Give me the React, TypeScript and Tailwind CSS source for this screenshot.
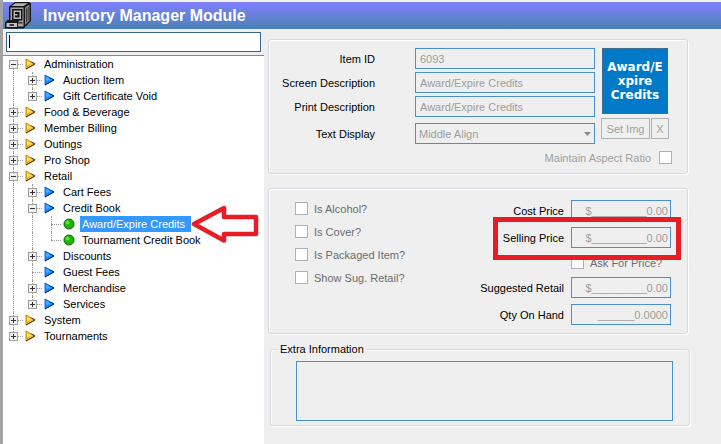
import { useState } from 'react'
import clsx from 'clsx'

type Node = { label: string; icon: 'gold' | 'blue' | 'dot'; open?: boolean; leaf?: boolean; children?: Node[] }

const tree: Node[] = [
  { label: 'Administration', icon: 'gold', open: true, children: [
    { label: 'Auction Item', icon: 'blue' },
    { label: 'Gift Certificate Void', icon: 'blue' },
  ] },
  { label: 'Food & Beverage', icon: 'gold' },
  { label: 'Member Billing', icon: 'gold' },
  { label: 'Outings', icon: 'gold' },
  { label: 'Pro Shop', icon: 'gold' },
  { label: 'Retail', icon: 'gold', open: true, children: [
    { label: 'Cart Fees', icon: 'blue' },
    { label: 'Credit Book', icon: 'blue', open: true, children: [
      { label: 'Award/Expire Credits', icon: 'dot', leaf: true },
      { label: 'Tournament Credit Book', icon: 'dot', leaf: true },
    ] },
    { label: 'Discounts', icon: 'blue' },
    { label: 'Guest Fees', icon: 'blue', leaf: true },
    { label: 'Merchandise', icon: 'blue' },
    { label: 'Services', icon: 'blue' },
  ] },
  { label: 'System', icon: 'gold' },
  { label: 'Tournaments', icon: 'gold' },
]

const field = 'block h-[21px] border border-[#4a90d0] bg-transparent text-[#9d9d9d]'
const group = 'rounded-[3px] border border-[#d5dbe1] shadow-[inset_1px_1px_0_#fff,1px_1px_0_#fff]'

function Cabinet() {
  return (
    <svg width="26" height="27" viewBox="0 0 26 27" aria-hidden="true">
      <path d="M4 4.500 10 0H24L26 1.500V19L18.500 26.500H4Z" fill="#151515" />
      <path d="M6.500 4 10.500 1.200H23L18.500 4Z" fill="#b4b4b4" />
      <path d="M20 5.500 24.500 2.500V18.500L20 23Z" fill="#8a8a8a" />
      <path d="M21.500 6.500V20M23.200 5V18.500" stroke="#333" />
      <path d="M5.500 5.500H18.500V24.500H5.500Z" fill="#a4a4a4" />
      <path d="M7 7H17.500V18.500H7Z" fill="#151515" />
      <path d="M8.500 8.500H16V17H8.500Z" fill="#b4b4b4" />
      <path d="M10 10H14.500V15.500H10V13.500H12.500V12H10Z" fill="#151515" />
      <path d="M13 20H17.500V21.500H13Z" fill="#333" />
      <path d="M0 20.500 2.500 18H14.500L13 20.500V26.500H0Z" fill="#151515" />
      <path d="M1.500 21H12V25H1.500Z" fill="#c4c4c4" />
      <path d="M4.500 22.200H9V23.800H4.500Z" fill="#151515" />
    </svg>
  )
}

function NodeIcon({ kind }: { kind: Node['icon'] }) {
  if (kind === 'dot') return (
    <svg width="12" height="12" viewBox="0 0 12 12" className="ml-[2px]" aria-hidden="true">
      <circle cx="6" cy="6" r="5" fill="#19b800" stroke="#14610b" />
      <circle cx="4.500" cy="4.500" r="2" fill="#5be63c" />
    </svg>
  )
  const gold = kind === 'gold'
  return (
    <svg width="11" height="12" viewBox="0 0 11 12" className="ml-[2px]" aria-hidden="true">
      <path d="M1 1 10 6 1 11Z" fill={gold ? '#f2b81c' : '#1687f5'} stroke={gold ? '#c98a10' : '#1268d8'} />
      <path d="M2 2.500V7L7 6Z" fill={gold ? '#ffe07a' : '#45b4ff'} />
      <path d="M1 11 10 6 6.500 4" fill="none" stroke={gold ? '#4e2d20' : '#122a80'} />
    </svg>
  )
}

function Pointer() {
  return (
    <svg width="68" height="40" viewBox="0 0 68 40" className="absolute left-full -top-[12px] z-10" aria-hidden="true">
      <path d="M3 20 33 4V13H65V30H33V36.500Z" fill="#fff" stroke="#e81c24" strokeWidth="4.500" strokeLinejoin="round" />
    </svg>
  )
}

function Rows({ nodes, guides, selected, onSelect }: { nodes: Node[]; guides: boolean[]; selected: string; onSelect: (s: string) => void }) {
  return (
    <ul>
      {nodes.map((n, i) => {
        const last = i === nodes.length - 1
        const first = i === 0 && guides.length === 0
        return (
          <li key={n.label}>
            <div className="flex h-4 items-center">
              {guides.map((g, k) => <span key={k} className="flex h-4 w-[19px] justify-center">{g && <span className="border-l border-dotted border-[#999]" />}</span>)}
              <span className="relative flex h-4 w-[19px] items-center justify-center">
                <span className={clsx('absolute left-[9px] border-l border-dotted border-[#999]', first ? 'top-2 bottom-0' : last ? 'top-0 h-2' : 'inset-y-0')} />
                <span className="absolute left-[9px] right-0 top-2 border-t border-dotted border-[#999]" />
                {!n.leaf && (
                  <button aria-label={n.label} className="relative grid size-[9px] place-items-center border border-[#a0a0a0] bg-[#f0f0f0]">
                    <span className="h-px w-[5px] bg-[#333]" />
                    {!n.open && <span className="absolute h-[5px] w-px bg-[#333]" />}
                  </button>
                )}
              </span>
              <span className="w-[19px]"><NodeIcon kind={n.icon} /></span>
              <span className="relative">
                <button onClick={() => onSelect(n.label)} className={clsx('block h-4 px-[2px] leading-4', selected === n.label && 'bg-[#3399ff] pr-[6px] text-white')}>{n.label}</button>
                {n.label === 'Award/Expire Credits' && <Pointer />}
              </span>
            </div>
            {n.open && n.children && <Rows nodes={n.children} guides={[...guides, !last]} selected={selected} onSelect={onSelect} />}
          </li>
        )
      })}
    </ul>
  )
}

function Check({ label }: { label: string }) {
  return (
    <label className="flex h-[13px] items-center gap-[6px] text-[#6d6d6d]">
      <input type="checkbox" disabled className="size-[13px] appearance-none border border-[#adb2b5] bg-white" />
      {label}
    </label>
  )
}

function Money({ id, label, value }: { id: string; label: string; value: string }) {
  return (
    <div className="flex items-center justify-end gap-[7px]">
      <label htmlFor={id}>{label}</label>
      <input id={id} disabled defaultValue={value} className={clsx(field, 'w-[100px] px-[2px] text-right')} />
    </div>
  )
}

function TextRow({ id, label, value }: { id: string; label: string; value: string }) {
  return (
    <div className="flex items-center gap-10">
      <label htmlFor={id} className="w-[106px] text-right">{label}</label>
      <input id={id} disabled defaultValue={value} className={clsx(field, 'min-w-0 flex-1 px-1')} />
    </div>
  )
}

export default function App() {
  const [selected, setSelected] = useState('Award/Expire Credits')
  const [query, setQuery] = useState('')
  return (
    <div className="flex min-h-screen flex-col border-l-[3px] border-[#a3a3a3] bg-[#efefef] font-['Liberation_Sans',Arial,sans-serif] text-[11px] leading-4 text-black">
      <header className="flex h-[29px] items-end gap-3 border-t-2 border-t-[#f5f5f5] bg-linear-to-b from-[#8080ff] to-[#4a80b4] pl-[2px]">
        <Cabinet />
        <h1 className="text-base leading-[27px] font-bold text-white">Inventory Manager Module</h1>
      </header>
      <div className="flex flex-1">
        <aside className="flex w-[261px] shrink-0 flex-col">
          <div className="relative px-[3px] py-[3px]">
            <input aria-label="Search" value={query} onChange={e => setQuery(e.target.value)} className="block h-5 w-full border border-[#3a6585] bg-white px-1 outline-none" />
            {!query && <span className="absolute left-[6px] top-[6px] h-[13px] w-px bg-black" />}
          </div>
          <nav className="flex-1 border-t border-[#828790] bg-white pl-px">
            <Rows nodes={tree} guides={[]} selected={selected} onSelect={setSelected} />
          </nav>
        </aside>
        <main className="flex flex-1 flex-col gap-[14px] pt-[10px] pr-[33px] pb-4 pl-1">
          <section className={clsx(group, 'pt-2 pb-[9px]')}>
            <div className="flex pr-[18px]">
              <div className="flex flex-1 flex-col gap-[3px]">
                <TextRow id="item" label="Item ID" value="6093" />
                <TextRow id="screen" label="Screen Description" value="Award/Expire Credits" />
                <TextRow id="print" label="Print Description" value="Award/Expire Credits" />
                <div className="flex items-center gap-10 pt-[3px]">
                  <label htmlFor="display" className="w-[106px] text-right">Text Display</label>
                  <div className="relative flex-1">
                    <select id="display" disabled className={clsx(field, 'w-full appearance-none px-[3px] opacity-100')}><option>Middle Align</option></select>
                    <svg width="7" height="4" viewBox="0 0 7 4" className="absolute right-1 top-[9px]" aria-hidden="true"><path d="M0 0H7L3.500 4Z" fill="#8d8d8d" /></svg>
                  </div>
                </div>
              </div>
              <div className="ml-[6px] flex flex-col items-center gap-1">
                <div className="flex size-[66px] flex-col justify-center border border-[#3f6b8c] bg-[#007ac8] text-center font-['DejaVu_Sans',Verdana,sans-serif] text-xs leading-[14px] font-bold text-white">
                  <span>Award/E</span><span>xpire</span><span>Credits</span>
                </div>
                <div className="flex gap-px text-[#a0a0a0]">
                  <button disabled className="h-[21px] w-[49px] border border-[#adb2b5]">Set Img</button>
                  <button disabled className="h-[21px] w-[18px] border border-[#adb2b5]">X</button>
                </div>
              </div>
            </div>
            <label className="mt-[7px] flex h-[13px] items-center justify-end gap-2 pr-[15px] text-[#a0a0a0]">
              Maintain Aspect Ratio
              <input type="checkbox" disabled className="size-[13px] appearance-none border border-[#adb2b5] bg-white" />
            </label>
          </section>

          <section className={clsx(group, 'flex justify-between pt-[11px] pr-4 pb-2 pl-[26px]')}>
            <div className="flex flex-col gap-[10px] pt-[2px]">
              <Check label="Is Alcohol?" />
              <Check label="Is Cover?" />
              <Check label="Is Packaged Item?" />
              <Check label="Show Sug. Retail?" />
            </div>
            <div className="flex flex-col gap-[6px]">
              <Money id="cost" label="Cost Price" value="$_________0.00" />
              <div className="relative">
                <Money id="selling" label="Selling Price" value="$_________0.00" />
                <span className="pointer-events-none absolute -top-[10px] -right-[10px] -bottom-3 z-10 w-[188px] border-5 border-[#e81c24]" />
              </div>
              <div className="ml-auto w-[100px] pt-[2px] pb-[2px]"><Check label="Ask For Price?" /></div>
              <Money id="suggested" label="Suggested Retail" value="$_________0.00" />
              <Money id="qty" label="Qty On Hand" value="______0.0000" />
            </div>
          </section>

          <fieldset className={clsx(group, '-mt-[7px] -mr-[2px] ml-[2px] pr-4 pb-1 pl-[25px]')}>
            <legend className="-ml-[18px] px-[2px]">Extra Information</legend>
            <textarea aria-label="Extra Information" disabled className="mt-1 block h-[60px] w-full resize-none border border-[#4a90d0] bg-transparent" />
          </fieldset>
        </main>
      </div>
    </div>
  )
}
